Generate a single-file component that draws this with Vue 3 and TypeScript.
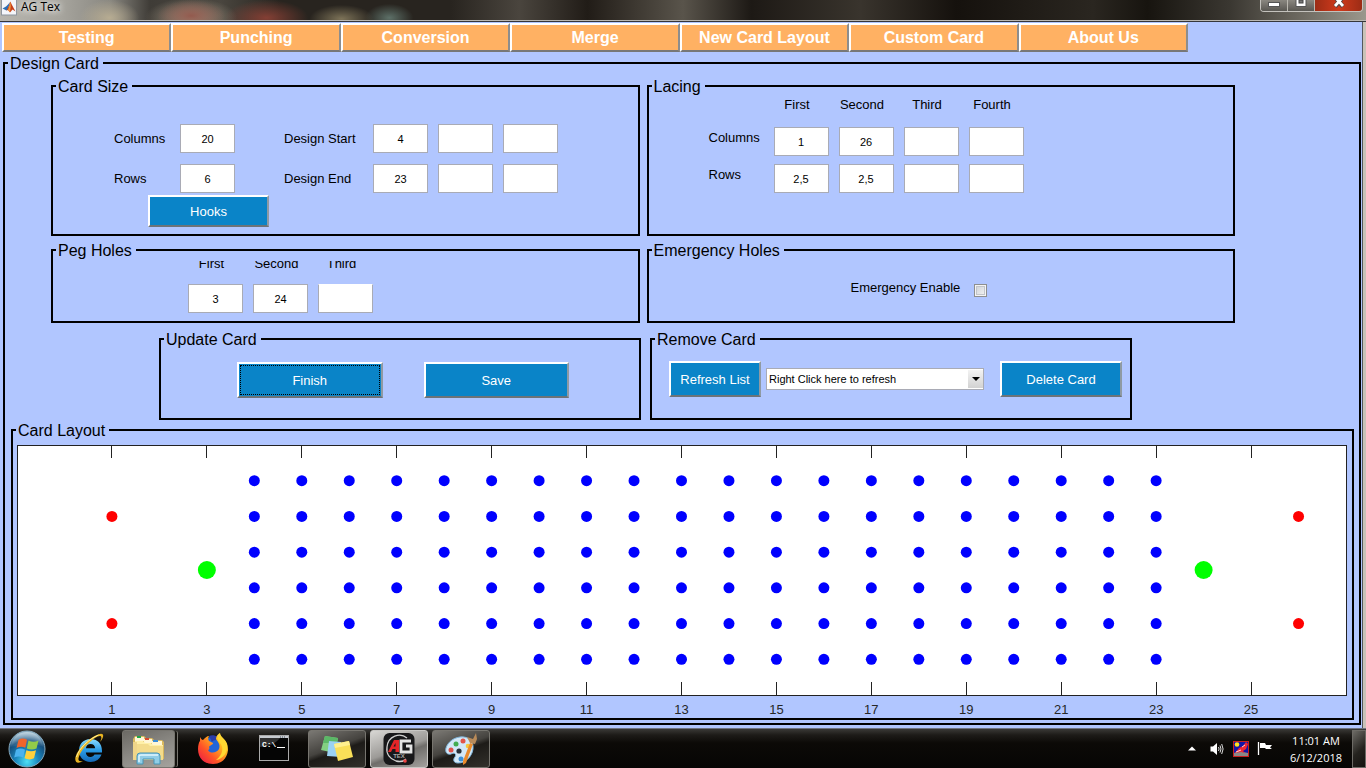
<script setup lang="ts">
import { ref } from 'vue'

const menu = ['Testing', 'Punching', 'Conversion', 'Merge', 'New Card Layout', 'Custom Card', 'About Us']

const columns = ref('20')
const rows = ref('6')
const designStart = ref(['4', '', ''])
const designEnd = ref(['23', '', ''])
const ordinals = ['First', 'Second', 'Third', 'Fourth']
const lacingColumns = ref(['1', '26', '', ''])
const lacingRows = ref(['2,5', '2,5', '', ''])
const pegs = ref(['3', '24', ''])
const emergency = ref(false)

interface Hole { x: number; y: number; r: number; fill: string }

const holes: Hole[] = []
for (let y = 1; y <= 6; y++) {
  for (let x = 4; x <= 23; x++) holes.push({ x, y, r: 5.5, fill: '#0000ff' })
}
for (const x of [1, 26]) for (const y of [2, 5]) holes.push({ x, y, r: 5.5, fill: '#ff0000' })
for (const x of [3, 24]) holes.push({ x, y: 3.5, r: 9, fill: '#00ff00' })

const ticks = Array.from({ length: 13 }, (_, i) => i * 2 + 1)
const px = (v: number) => `${((v + 1) / 28) * 100}%`
const py = (v: number) => `${(v / 7) * 100}%`
</script>

<template>
  <div class="desktop">
    <header class="titlebar">
      <svg class="app-icon" width="16" height="16" viewBox="0 0 16 16">
        <rect x="0.5" y="-1" width="15" height="16" fill="#f4f6fa" stroke="#8e959e" />
        <path d="M1.5 8.5 L5 6.5 L7.5 4 L9 2 L7 9 L5.5 10.5 Z" fill="#2d6fb5" />
        <path d="M9.3 1.5 L11 5 L14.5 11.5 L11.5 9.5 L9 12.5 L7 10 L5.5 10.5 L7.8 6 Z" fill="#c8411b" />
        <path d="M9.3 2 L9.8 6 L9 12 L7 10 L8.3 6 Z" fill="#f39a3c" />
      </svg>
      <span class="title">AG Tex</span>
      <div class="controls">
        <button type="button" class="min" aria-label="Minimize">
          <svg width="12" height="6" viewBox="0 0 12 6"><rect x="0.5" y="0.5" width="11" height="4" fill="#fff" stroke="#555" /></svg>
        </button>
        <button type="button" class="max" aria-label="Maximize">
          <svg width="12" height="8" viewBox="0 0 12 8"><path d="M1 -2 V6.500 H11 V-2 Z" fill="#fff" stroke="#555" /><rect x="4" y="0" width="4" height="3" fill="#777" stroke="#444" /></svg>
        </button>
        <button type="button" class="close" aria-label="Close">
          <svg width="14" height="10" viewBox="0 0 14 10"><path d="M3 -3 L11 6.5 M11 -3 L3 6.5" stroke="#544" stroke-width="4.5" /><path d="M3 -3 L11 6 M11 -3 L3 6" stroke="#fff" stroke-width="2.8" /></svg>
        </button>
      </div>
    </header>

    <main class="window">
      <nav class="menu">
        <button v-for="m in menu" :key="m" type="button">{{ m }}</button>
      </nav>

      <fieldset class="panel design">
        <legend>Design Card</legend>

        <div class="pair settings">
          <fieldset class="panel">
            <legend>Card Size</legend>
            <div class="size-grid">
              <label for="cols">Columns</label>
              <input id="cols" v-model="columns" type="text" />
              <label for="start0" class="indent">Design Start</label>
              <input v-for="(_, i) in designStart" :id="`start${i}`" :key="`s${i}`" v-model="designStart[i]" type="text" :aria-label="`Design Start ${i + 1}`" />
              <label for="rows">Rows</label>
              <input id="rows" v-model="rows" type="text" />
              <label for="end0" class="indent">Design End</label>
              <input v-for="(_, i) in designEnd" :id="`end${i}`" :key="`e${i}`" v-model="designEnd[i]" type="text" :aria-label="`Design End ${i + 1}`" />
            </div>
            <button type="button" class="action hooks">Hooks</button>
          </fieldset>

          <fieldset class="panel">
            <legend>Lacing</legend>
            <div class="lacing-grid">
              <span></span>
              <span v-for="o in ordinals" :key="o" class="head">{{ o }}</span>
              <label for="lc0">Columns</label>
              <input v-for="(_, i) in lacingColumns" :id="`lc${i}`" :key="`c${i}`" v-model="lacingColumns[i]" type="text" :aria-label="`Lacing column ${ordinals[i]}`" />
              <label for="lr0">Rows</label>
              <input v-for="(_, i) in lacingRows" :id="`lr${i}`" :key="`r${i}`" v-model="lacingRows[i]" type="text" :aria-label="`Lacing rows ${ordinals[i]}`" />
            </div>
          </fieldset>

          <fieldset class="panel">
            <legend>Peg Holes</legend>
            <div class="peg-grid">
              <label v-for="(_, i) in pegs" :key="`l${i}`" :for="`peg${i}`">{{ ordinals[i] }}</label>
              <input v-for="(_, i) in pegs" :id="`peg${i}`" :key="`p${i}`" v-model="pegs[i]" type="text" />
            </div>
          </fieldset>

          <fieldset class="panel">
            <legend>Emergency Holes</legend>
            <div class="emergency">
              <label for="emergency">Emergency Enable</label>
              <input id="emergency" v-model="emergency" type="checkbox" />
            </div>
          </fieldset>
        </div>

        <div class="pair actions">
          <fieldset class="panel">
            <legend>Update Card</legend>
            <div class="update">
              <button type="button" class="action focused">Finish</button>
              <button type="button" class="action">Save</button>
            </div>
          </fieldset>
          <fieldset class="panel">
            <legend>Remove Card</legend>
            <div class="remove">
              <button type="button" class="action refresh">Refresh List</button>
              <span class="combo">
                <select aria-label="Card to remove">
                  <option>Right Click here to refresh</option>
                </select>
                <svg class="arrow" width="15" height="18" viewBox="0 0 15 18"><path d="M4 7 H12 L8 11 Z" fill="#000" /></svg>
              </span>
              <button type="button" class="action delete">Delete Card</button>
            </div>
          </fieldset>
        </div>

        <fieldset class="panel layout">
          <legend>Card Layout</legend>
          <div class="plot">
            <svg class="chart" width="100%" height="250">
              <rect width="100%" height="100%" fill="#fff" stroke="#222" shape-rendering="crispEdges" />
              <g v-for="t in ticks" :key="t">
                <line :x1="px(t)" :x2="px(t)" y1="0" y2="13" stroke="#222" shape-rendering="crispEdges" />
                <line :x1="px(t)" :x2="px(t)" y1="237" y2="250" stroke="#222" shape-rendering="crispEdges" />
                <text :x="px(t)" y="269" text-anchor="middle">{{ t }}</text>
              </g>
              <circle v-for="(h, i) in holes" :key="i" :cx="px(h.x)" :cy="py(h.y)" :r="h.r" :fill="h.fill" />
            </svg>
          </div>
        </fieldset>
      </fieldset>
    </main>

    <footer class="taskbar">
      <button type="button" class="start" aria-label="Start">
        <svg width="38" height="38" viewBox="0 0 38 38">
          <defs>
            <radialGradient id="orb" cx="50%" cy="85%" r="80%">
              <stop offset="0" stop-color="#4fe0f5" /><stop offset="0.4" stop-color="#1a86bd" /><stop offset="0.75" stop-color="#154e7c" /><stop offset="1" stop-color="#8fb3c8" />
            </radialGradient>
            <linearGradient id="gloss" x1="0" y1="0" x2="0" y2="1">
              <stop offset="0" stop-color="#fff" stop-opacity="0.75" /><stop offset="1" stop-color="#fff" stop-opacity="0.08" />
            </linearGradient>
          </defs>
          <circle cx="19" cy="19" r="18" fill="url(#orb)" stroke="#86a9bd" />
          <path d="M3 17 C4 7 11 2 19 2 C27 2 34 7 35 17 C28 13 24 16 19 17 C13 18 8 15 3 17 Z" fill="url(#gloss)" opacity="0.55" />
          <path d="M10.500 10 C13.500 8 16.500 8.300 19 9.800 L17.300 17.800 C14.500 16.400 11.500 16.600 8.500 18 Z" fill="#f0642b" />
          <path d="M20.500 10.500 C23.500 12 27 12.200 30.500 10.500 L28.500 18.500 C25.300 20 21.800 19.800 18.800 18.400 Z" fill="#93cb48" />
          <path d="M8 19.700 C11 18.200 14 18.200 17 19.700 L15.200 27.500 C12.500 26 9.200 26 6.200 27.600 Z" fill="#4bb2ef" />
          <path d="M18.400 20.300 C21.300 21.700 24.800 21.700 28 20.300 L26 28.300 C23 29.900 19.500 29.600 16.500 28.200 Z" fill="#ffd03c" />
        </svg>
      </button>

      <button type="button" class="task" aria-label="Internet Explorer">
        <svg width="36" height="34" viewBox="0 0 36 34">
          <defs><linearGradient id="ie" x1="0" y1="0" x2="0" y2="1"><stop offset="0" stop-color="#8adcff" /><stop offset="0.5" stop-color="#2a9be6" /><stop offset="1" stop-color="#1467b4" /></linearGradient></defs>
          <path d="M31 19 C31 11 26 7 19.500 7 C12.500 7 8 12 8 18.500 C8 25 12.500 30 19.500 30 C25 30 29 27 30.500 22.500 H23.500 C22.700 24 21.400 25 19.500 25 C16.800 25 15 23.200 14.800 20.500 H31 Z M14.900 16.200 C15.300 13.600 17 12 19.600 12 C22.200 12 23.900 13.600 24.200 16.200 Z" fill="url(#ie)" />
          <path d="M29 10 C34 4 33 0 27 2.500 C18 6 7 16 4.500 25 C3.500 30 6 32.500 12 29 C8 30 6.500 28.500 8 24.500 C11 16 20 8 26.500 4.500 C30.500 2.700 31.500 5 29 10 Z" fill="#e9b422" />
          <path d="M5.500 25 C8 16 18 7 27.500 3" fill="none" stroke="#fff09a" stroke-width="1" />
        </svg>
      </button>

      <button type="button" class="task open stacked" aria-label="Windows Explorer">
        <svg width="34" height="32" viewBox="0 0 34 32">
          <path d="M1 6 L3 3 H12 L14 5 H20 L22 7 H30 L32 9 V26 L1 27 Z" fill="#d9b85d" />
          <path d="M3 4 H12 V8 H3 Z M12 6 H20 V10 H12 Z M20 8 H30 V12 H20 Z" fill="#fff6d6" />
          <rect x="5" y="3" width="4" height="2" fill="#20a548" /><rect x="13" y="5" width="4" height="2" fill="#d84830" /><rect x="21" y="7" width="5" height="2" fill="#3a8dd8" />
          <path d="M3 8 H11 L13 10 H19 L21 12 H31 V26 H3 Z" fill="#fff0a8" />
          <path d="M1 9 H5 V27 H1 Z" fill="#f0d689" /><path d="M5 11 H16 L18 13 H31 V27 H5 Z" fill="#f4dc8c" />
          <path d="M5 31 V23 Q5 20 8 20 H25 Q28 20 28 23 V31 H22 V26 H11 V31 Z" fill="#90cde6" stroke="#4795b8" />
          <path d="M7 29 V23 Q7 22 9 22 H26" fill="none" stroke="#dff6ff" stroke-width="1.500" />
        </svg>
      </button>

      <button type="button" class="task" aria-label="Firefox">
        <svg width="32" height="32" viewBox="0 0 32 32">
          <defs><linearGradient id="fox" x1="1" y1="0" x2="0" y2="1"><stop offset="0" stop-color="#fff34f" /><stop offset="0.35" stop-color="#ffb01f" /><stop offset="0.65" stop-color="#ff5427" /><stop offset="1" stop-color="#e8114e" /></linearGradient></defs>
          <circle cx="17" cy="13" r="10" fill="#2165d8" />
          <path d="M12 3 C17 1 23 4 23 9 C20 6 16 7 15 9 Z" fill="#2a3ca8" />
          <path d="M3 4 C4 6 5 7 6 7 C8 5 10 3 12 3 C11 5 11 7 12 8 L16 10 C16 12 13 12 12 14 C13 15 12 17 11 17 C13 21 20 20 22 16 C24 11 20 8 19 6 C19 3 21 1 23 0 C23 4 28 5 30 11 C31 13 31 17 31 17 C30 26 24 31 16 31 C7 31 1 25 1 16 C1 12 2 9 3 8 Z" fill="url(#fox)" />
          <path d="M23 0 C23 4 28 6 30 11 C31 20 26 26 19 27 C26 22 27 14 23 10 C20 7 20 3 23 0 Z" fill="#ffd832" />
        </svg>
      </button>

      <button type="button" class="task cmd" aria-label="Command Prompt">
        <svg width="30" height="26" viewBox="0 0 30 26">
          <rect x="0.5" y="0.5" width="29" height="25" fill="#050505" stroke="#aaa" />
          <rect x="1" y="1" width="28" height="2" fill="#c7cbd0" /><path d="M21 2 H27" stroke="#47505c" stroke-dasharray="1 1" />
          <path d="M1 12 C10 12 17 8 21 3 H1 Z" fill="#444" opacity="0.7" />
          <text x="3" y="12" class="prompt">C:\</text>
          <path d="M18 12.500 H26" stroke="#fff" />
        </svg>
      </button>

      <button type="button" class="task open" aria-label="Sticky Notes">
        <svg width="34" height="28" viewBox="0 0 34 28">
          <path d="M5 1 L18 3 L15 18 L1 15 Z" fill="#83cf82" /><path d="M5 1 L18 3 L17 8 L3 8 Z" fill="#5bb867" />
          <path d="M9 6 L21 7 L21 22 L7 21 Z" fill="#9bd2f4" />
          <path d="M14 9 L29 6 L33 22 L18 26 Z" fill="#f9df58" /><path d="M14 9 L29 6 L30 10 L15 13 Z" fill="#fff08f" />
        </svg>
      </button>

      <button type="button" class="task open active" aria-label="AG Tex">
        <svg width="32" height="34" viewBox="0 0 32 34">
          <rect x="0.500" y="1" width="31" height="32" rx="6" fill="#18181a" />
          <path d="M24 6 C17 0 5 4 4 15 C3 22 7 27 13 29 C17 30 21 29 23 27" fill="none" stroke="#d0d0d0" stroke-width="1.300" />
          <path d="M5 20 L11 8 H16 V20 H12.500 V17 H9.500 L8 20 Z M10.500 14.500 H12.500 V11 Z" fill="#e42528" fill-rule="evenodd" />
          <path d="M28 9 H18 V20 H28 V14 H23" fill="none" stroke="#e4e4e4" stroke-width="2.800" />
          <text x="16" y="26" text-anchor="middle" class="tex">TEX</text>
          <circle cx="22" cy="29" r="1.800" fill="#e44" />
        </svg>
      </button>

      <button type="button" class="task open" aria-label="Paint">
        <svg width="36" height="34" viewBox="0 0 36 34">
          <path d="M17 5 C25 4 31 9 30 17 C29 25 22 31 15 31 C10 31 10 27 12 25 C14 22 11 20 8 22 C4 23 2 20 3 16 C5 10 10 6 17 5 Z" fill="#d3e8f7" stroke="#7fb4da" />
          <circle cx="8" cy="18" r="2.500" fill="#e0524b" /><circle cx="13" cy="12" r="2.500" fill="#43ad51" /><circle cx="20" cy="9" r="2.500" fill="#e25448" /><circle cx="25" cy="14" r="2.300" fill="#f5c83c" />
          <circle cx="16" cy="19" r="2.600" fill="#273039" /><circle cx="18" cy="27" r="2.500" fill="#3b90d8" />
          <path d="M30 12 L23 31 L20 33 L20 29 L27 11 Z" fill="#e98a2c" /><path d="M27 11 L24 5 L30 7 L33 1 L34 7 L32 12 Z" fill="#b88a59" />
        </svg>
      </button>

      <div class="tray">
        <svg width="8" height="5" viewBox="0 0 8 5"><path d="M0 4.500 L4 0.500 L8 4.500 Z" fill="#fff" /></svg>
        <svg class="speaker" width="14" height="14" viewBox="0 0 14 14"><path d="M0.500 4.500 H3 L7 1 V13 L3 9.500 H0.500 Z" fill="#fff" /><path d="M8.500 5 Q9.700 7 8.500 9 M10 3.500 Q12 7 10 10.500 M11.700 2 Q14.500 7 11.700 12" fill="none" stroke="#ddd" /></svg>
        <svg width="16" height="16" viewBox="0 0 16 16"><rect x="0.500" y="0.500" width="15" height="15" fill="#1414a8" stroke="#c81e1e" /><circle cx="4" cy="3.500" r="2.300" fill="#ffe51e" /><path d="M1 15 V12 L6 10 L15 12 V15 Z" fill="#888" /><path d="M2 12 L6 7 L10 5 L13 1 L15 3 L13 8 L10 10 L12 12 L8 11 Z" fill="#ef2635" /><path d="M3 11 L8 9 M9 6 L12 4" stroke="#fff" stroke-width="0.800" /></svg>
        <svg class="flag" width="16" height="15" viewBox="0 0 16 15"><path d="M1.500 1 V14" stroke="#fff" stroke-width="1.300" /><path d="M3 2 H8 L9 4 H15 L13 6.500 L15 8 H9 L8 7 H3 Z" fill="#fff" /></svg>
        <div class="clock"><span>11:01 AM</span><span>6/12/2018</span></div>
        <button type="button" class="peek" aria-label="Show desktop"></button>
      </div>
    </footer>
  </div>
</template>

<style>
body {
  margin: 0;
  background: #b1c6ff;
}
</style>

<style scoped>
.desktop {
  display: flex;
  flex-direction: column;
  min-height: 100vh;
  font: 13px/18px "Liberation Sans", Arial, sans-serif;
  color: #000;
  background: #b1c6ff;
}
.desktop * {
  box-sizing: border-box;
}
button,
input,
select {
  font-family: inherit;
  margin: 0;
}

/* title bar */
.titlebar {
  display: flex;
  align-items: flex-start;
  height: 22px;
  padding-left: 1px;
  padding-right: 3px;
  border-bottom: 1px solid #35363a;
  box-shadow: inset 0 -1px 0 #b9b7b2;
  background:
    radial-gradient(ellipse 30px 18px at 8% 85%, #b7ac92, transparent),
    radial-gradient(ellipse 34px 16px at 14% 75%, #935a4e, transparent),
    radial-gradient(ellipse 46px 20px at 14% 85%, #a39784, transparent),
    radial-gradient(ellipse 42px 18px at 19.500% 85%, #843f34, transparent),
    radial-gradient(ellipse 32px 14px at 25% 90%, #7d7358, transparent),
    radial-gradient(ellipse 24px 14px at 28.500% 85%, #5d7068, transparent),
    linear-gradient(90deg, #b7b5ae 0, #a7a59e 60px, #8a8881 110px, #3f3c37 150px, #4a463f 220px, #28241f 280px, #28241f 33%, #4a453e 38%, #211c17 43%, #59544b 50%, #1d1915 55%, #39342d 63%, #15110d 70%, #2a2620 80%, #17140f 84%, #3a3731 90%, #9b978c 100%);
}
.title {
  margin-left: 4px;
  font: 12px/14px "Open Sans", "Noto Sans", sans-serif;
  text-shadow: 0 0 6px #fff, 0 0 8px #fff;
}
.controls {
  display: flex;
  margin-left: auto;
  height: 12px;
  border: 1px solid #c4c2bd;
  border-top: 0;
  border-radius: 0 0 4px 4px;
  overflow: hidden;
}
.controls button {
  display: flex;
  justify-content: center;
  align-items: flex-start;
  padding: 0;
  border: 0;
  width: 27px;
  height: 12px;
  background: linear-gradient(#8a8780, #55534e);
  border-right: 1px solid #bbb8b0;
}
.controls .min {
  padding-top: 2px;
}
.controls .close {
  width: 47px;
  border-right: 0;
  background: linear-gradient(90deg, #9c2c15, #d03a1c 50%, #9c2c15);
}

/* window */
.window {
  margin-right: 3px;
  padding-bottom: 3px;
  border-right: 1px solid #55575c;
  box-shadow: 3px 0 0 #c9c2b8;
}
.menu {
  display: grid;
  grid-template-columns: repeat(7, 1fr);
  padding: 1px 174px 1px 2px;
}
.menu button {
  height: 29px;
  padding: 0;
  border: 2px solid;
  border-color: #fff #8d8d8d #777 #fff;
  background: #ffb163;
  color: #fff;
  font-size: 16px;
  font-weight: bold;
  white-space: nowrap;
}

.panel {
  min-width: 0;
  margin: 0;
  padding: 0;
  border: 2px solid #000;
}
.panel > legend {
  margin-left: 3px;
  padding: 2px 4px 0 2px;
  font-size: 16px;
  line-height: 18px;
}
.design {
  margin: 0 1px 0 3px;
  padding: 3px 0;
}
.pair {
  display: grid;
  grid-template-columns: 1fr 1fr;
}
.settings {
  grid-template-rows: 160px 83px;
  gap: 4px 7px;
  padding: 0 124px 0 46px;
}
.actions {
  grid-template-rows: 91px;
  gap: 9px;
  margin-top: 6px;
  padding: 0 227px 0 154px;
}

input[type='text'] {
  width: 55px;
  height: 29px;
  padding: 0;
  border: 1px solid #a9abb5;
  background: #fff;
  font-size: 11px;
  text-align: center;
}
.action {
  height: 36px;
  padding: 0;
  border: 2px solid;
  border-color: #fff #8f9aa3 #6d7378 #fff;
  background: #0a84c8;
  color: #fff;
  font-size: 13px;
  white-space: nowrap;
}

.size-grid {
  display: grid;
  grid-template-columns: 66px 55px 118px repeat(3, 55px);
  gap: 11px 10px;
  align-items: center;
  padding: 28px 0 0 51px;
}
.size-grid label {
  padding-left: 10px;
}
.size-grid .indent {
  padding-left: 39px;
}
.hooks {
  display: block;
  width: 121px;
  height: 32px;
  margin: 2px 0 0 95px;
}

.lacing-grid {
  display: grid;
  grid-template-columns: repeat(5, 55px);
  grid-template-rows: 23px 29px 29px;
  gap: 8px 10px;
  padding-left: 60px;
}
.lacing-grid label {
  line-height: 22px;
}
.head {
  padding-right: 8px;
  text-align: center;
}

.peg-grid {
  display: grid;
  grid-template-columns: repeat(3, 55px);
  gap: 11px 10px;
  padding: 1px 0 0 135px;
}
.peg-grid label {
  display: flex;
  align-items: flex-end;
  justify-content: center;
  height: 12px;
  padding-right: 8px;
  overflow: hidden;
}
.peg-grid input:last-child {
  border-top-color: #fff;
}

.emergency {
  display: flex;
  align-items: center;
  gap: 14px;
  padding: 19px 0 0 202px;
}
.emergency input {
  appearance: none;
  width: 13px;
  height: 13px;
  margin-top: 4px;
  border: 1px solid #8e8f8f;
  background: linear-gradient(135deg, #cbcfd5, #f6f6f6);
  box-shadow: inset 0 0 0 1px #f4f4f4, inset 0 0 0 2px #c2c5ca;
}
.emergency input:checked {
  background: #0a84c8;
}

.update {
  display: flex;
  gap: 41px;
  padding: 13px 70px 0 76px;
}
.update .action {
  flex: 1;
}
.focused {
  outline: 1px dotted #000;
  outline-offset: -4px;
}
.remove {
  display: flex;
  align-items: center;
  padding: 12px 8px 0 17px;
}
.refresh {
  width: 92px;
}
.delete {
  width: 122px;
}
.combo {
  position: relative;
  flex: 1;
  height: 22px;
  margin: 0 16px 0 5px;
}
.combo select {
  display: block;
  width: 100%;
  height: 22px;
  padding: 0 18px 0 2px;
  appearance: none;
  border: 1px solid #a9abb5;
  border-radius: 0;
  background: #fff;
  color: #000;
  font-size: 11px;
}
.arrow {
  position: absolute;
  top: 2px;
  right: 1px;
  background: linear-gradient(#f3f3f3, #d2d2d2);
  pointer-events: none;
}

.layout {
  margin: 0 5px 0 6px;
}
.plot {
  padding: 5px 6px 23px 4px;
}
.chart {
  display: block;
  overflow: visible;
}
.chart text {
  font-size: 13px;
  fill: #262626;
}

/* taskbar */
.taskbar {
  display: flex;
  align-items: center;
  gap: 4px;
  height: 40px;
  margin-top: auto;
  border-top: 1px solid #6e7380;
  background: linear-gradient(#3a3936 0, #1d1b18 6px, #0c0a07 14px, #060504 100%);
}
.taskbar button {
  padding: 0;
  border: 0;
  background: none;
}
.taskbar .start {
  display: flex;
  width: 56px;
  padding-left: 8px;
}
.task {
  display: flex;
  align-items: center;
  justify-content: center;
  width: 58px;
  height: 38px;
}
.taskbar .cmd {
  padding: 0 2px 2px 0;
}
.taskbar .open {
  border: 1px solid #77756f;
  border-radius: 3px;
  background: linear-gradient(160deg, #7b7974 0, #45433f 45%, #1d1b18 55%, #32302b 100%);
}
.taskbar .stacked {
  width: 53px;
  margin-right: 5px;
  background: linear-gradient(160deg, #6b6964 0, #8b8984 50%, #a5a39e 100%);
  box-shadow: 3px 0 0 -1px #15130f, 4px 0 0 -1px #77756f;
}
.taskbar .active {
  border-color: #c9c8c5;
  background: linear-gradient(160deg, #d8d7d4 0, #9c9a97 50%, #6f6d6a 60%, #a3a19e 100%);
}
.prompt {
  font: bold 8px "Liberation Mono", monospace;
  fill: #fff;
}
.tex {
  font: bold 6px "Liberation Sans", sans-serif;
  fill: #a8a8a8;
}
.tray {
  display: flex;
  align-items: center;
  height: 100%;
  margin-left: auto;
}
.speaker {
  margin: 0 9px 0 14px;
}
.flag {
  margin-left: 8px;
}
.clock {
  display: flex;
  flex-direction: column;
  align-items: center;
  width: 72px;
  margin-left: 7px;
  color: #fff;
  font: 11px/17px "Open Sans", "Noto Sans", sans-serif;
}
.tray .peek {
  width: 14px;
  height: 38px;
  border: 1px solid #6d6b66;
  background: linear-gradient(135deg, #6d6b66, #25231f 55%, #14120f);
}
</style>
